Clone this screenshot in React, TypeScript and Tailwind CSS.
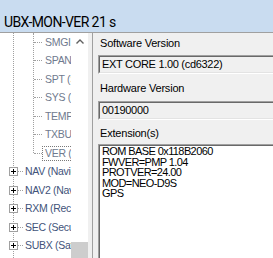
const subs = [
  "SMGI (Sensor Manager)",
  "SPAN (Spectrum)",
  "SPT (Sensor Test)",
  "SYS (System)",
  "TEMP (Temperature)",
  "TXBUF (Tx Buffer)",
  "VER (Version)",
];

const roots = [
  "NAV (Navigation)",
  "NAV2 (Navigation 2)",
  "RXM (Receiver Manager)",
  "SEC (Security)",
  "SUBX (Sat Subframes)",
];

const extensions = ["ROM BASE 0x118B2060", "FWVER=PMP 1.04", "PROTVER=24.00", "MOD=NEO-D9S", "GPS"];

function PlusBox() {
  return (
    <span className="relative z-10 ml-[9px] flex h-[9px] w-[9px] shrink-0 items-center justify-center border border-[#a0a0a0] bg-white">
      <svg width="7" height="7" viewBox="0 0 7 7">
        <rect x="1" y="3" width="5" height="1" fill="#000" />
        <rect x="3" y="1" width="1" height="5" fill="#000" />
      </svg>
    </span>
  );
}

function SunkenBox({ children }: { children: React.ReactNode }) {
  return (
    <div className="w-[220px] border border-[#a0a0a0] border-b-white border-r-white">
      <div className="border border-[#696969] border-b-[#e3e3e3] border-r-[#e3e3e3] bg-[#f0f0f0]">{children}</div>
    </div>
  );
}

export default function App() {
  return (
    <div className="flex h-[258px] w-[273px] flex-col overflow-hidden bg-[#f0f0f0] font-['Liberation_Sans',Arial,sans-serif] text-black">
      <div className="h-[32px] shrink-0 bg-[#c9dcf0] pl-[4px] pt-[14px] font-['Roboto',sans-serif] text-[14px] leading-[16px] tracking-[-0.6px]">
        UBX-MON-VER 21 s
      </div>
      <div className="h-px shrink-0 bg-[#a0a0a0]" />
      <div className="flex min-h-0 flex-1">
        {/* tree */}
        <div className="relative w-[71px] shrink-0 overflow-hidden bg-white text-[10.5px] leading-[13px] tracking-[-0.3px]">
          <div className="absolute left-[13px] top-0 h-full border-l border-dotted border-[#a0a0a0]" />
          <div className="absolute left-[33px] top-0 h-[120px] border-l border-dotted border-[#a0a0a0]" />
          {subs.map((s, i) => (
            <div key={s} className="flex h-[18.5px] items-center whitespace-nowrap">
              <span className="ml-[34px] w-[8px] shrink-0 border-t border-dotted border-[#a0a0a0]" />
              <span
                className={`border px-[2px] text-[#6f7a8e] ${
                  i === subs.length - 1 ? "border-dotted border-[#7a7a7a]" : "border-transparent"
                }`}
              >
                {s}
              </span>
            </div>
          ))}
          {roots.map((r) => (
            <div key={r} className="flex h-[18.5px] items-center whitespace-nowrap">
              <PlusBox />
              <span className="w-[5px] shrink-0 border-t border-dotted border-[#a0a0a0]" />
              <span className="border border-transparent px-px text-[#42537a]">{r}</span>
            </div>
          ))}
        </div>
        {/* tree scrollbar */}
        <div className="flex w-[17px] shrink-0 flex-col bg-white">
          <div className="flex h-[17px] items-center justify-center">
            <svg width="8" height="5" viewBox="0 0 8 5">
              <path d="M0.5 4.5 L4 1 L7.5 4.5" fill="none" stroke="#606060" strokeWidth="1.4" />
            </svg>
          </div>
          <div className="flex-1" />
          <div className="h-[16px] bg-[#cdcdcd]" />
        </div>
        <div className="w-[4px] shrink-0 bg-[#f0f0f0]" />
        {/* detail panel */}
        <div className="flex min-w-0 flex-1 flex-col overflow-hidden border-l border-[#a0a0a0] pl-[5px] pt-[3px] text-[11px] tracking-[-0.2px]">
          <div className="ml-[2px] leading-[14px]">Software Version</div>
          <div className="mt-[5px]">
            <SunkenBox>
              <div className="h-[15px] pl-[2px] leading-[15px] tracking-[-0.3px]">EXT CORE 1.00 (cd6322)</div>
            </SunkenBox>
          </div>
          <div className="ml-[2px] mt-[7px] leading-[14px]">Hardware Version</div>
          <div className="mt-[6px]">
            <SunkenBox>
              <div className="h-[15px] pl-[2px] leading-[15px] tracking-[-0.3px]">00190000</div>
            </SunkenBox>
          </div>
          <div className="ml-[2px] mt-[6px] leading-[14px]">Extension(s)</div>
          <div className="mt-[4px] flex-1">
            <div className="h-[130px] w-[220px] border border-[#a0a0a0] border-r-white">
              <div className="flex h-full flex-col border border-[#696969] border-r-[#e3e3e3] bg-white">
                <div className="flex-1 pl-[2px] text-[11px] leading-[10.5px] tracking-[-0.6px]">
                  {extensions.map((e) => (
                    <div key={e}>{e}</div>
                  ))}
                </div>
                <div className="h-[13px] border-t border-[#dcdcdc] bg-[#f0f0f0]" />
              </div>
            </div>
          </div>
        </div>
      </div>
    </div>
  );
}
